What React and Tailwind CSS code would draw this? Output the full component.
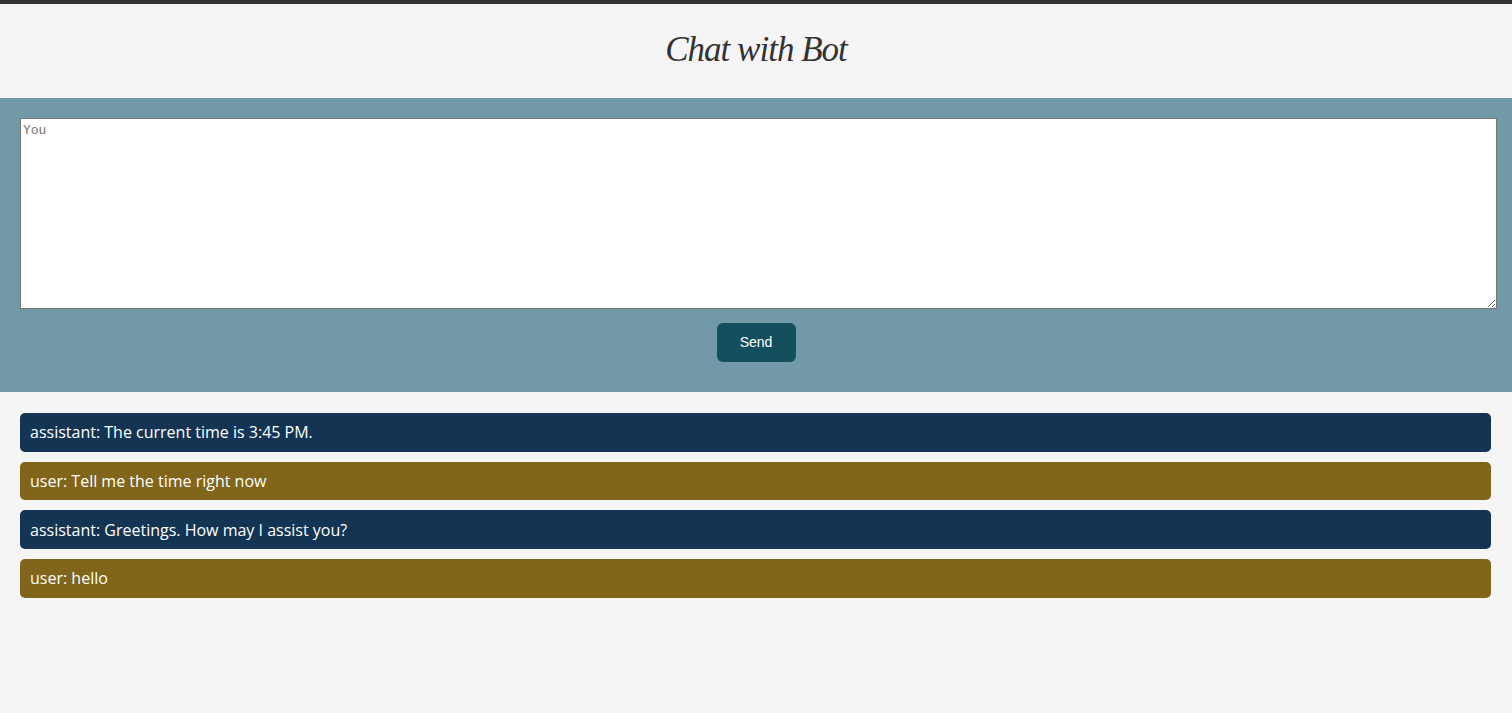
const MESSAGES = [
  { role: "assistant", content: "The current time is 3:45 PM." },
  { role: "user", content: "Tell me the time right now" },
  { role: "assistant", content: "Greetings. How may I assist you?" },
  { role: "user", content: "hello" },
];

function App() {
  return (
    <main className="min-h-[713px] bg-[#f5f5f5]">
      <div className="h-[4px] bg-[#333333]" />

      <header className="flex h-[94px] items-center justify-center">
        <h1 className="pb-[2px] font-['Liberation_Serif',serif] text-[35px] tracking-[-1px] italic text-[#333333]">
          Chat with Bot
        </h1>
      </header>

      <section className="flex flex-col items-center bg-[#7299a7] pt-[20px] pb-[30px]">
        <textarea
          placeholder="You"
          className="ml-[20px] h-[191px] w-[1477px] self-start border border-[#767676] bg-white px-[2px] py-[2px] font-['Liberation_Mono',monospace]! text-[13px] text-[#333] outline-none placeholder:font-['Liberation_Mono',monospace] placeholder:text-[#757575]"
        />
        <button
          type="button"
          className="mt-[14px] h-[39px] w-[79px] rounded-[6px] bg-[#134f5c] font-['Liberation_Sans',Arial,sans-serif] text-[14px] text-white"
        >
          Send
        </button>
      </section>

      <div className="flex flex-col gap-[10px] pt-[21px] pr-[21px] pl-[20px]">
        {MESSAGES.map((msg, idx) => (
          <div
            key={idx}
            className={`flex h-[38.67px] items-center rounded-[5px] px-[10px] font-['Open_Sans',sans-serif] text-[16px] text-white ${
              msg.role === "assistant" ? "bg-[#133453]" : "bg-[#80651a]"
            }`}
          >
            {msg.role}: {msg.content}
          </div>
        ))}
      </div>
    </main>
  );
}

export default App;
